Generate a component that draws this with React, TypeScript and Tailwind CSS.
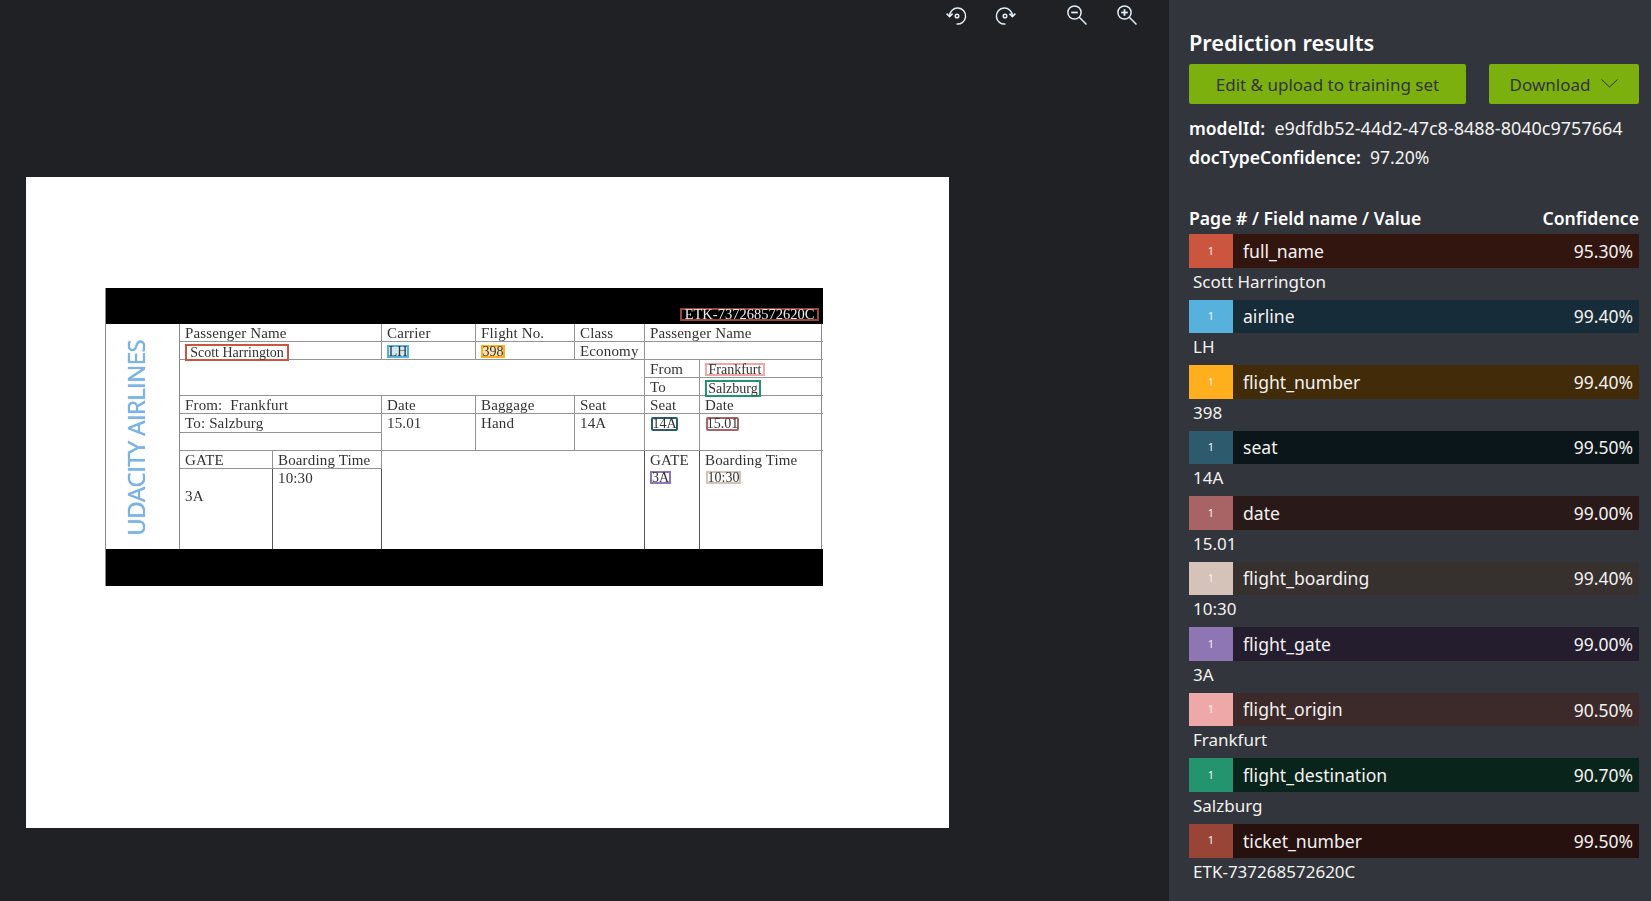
const fields = [
  { name: 'full_name', value: 'Scott Harrington', conf: '95.30%', color: 'bg-[#cc5540]', dark: 'bg-[#331510]' },
  { name: 'airline', value: 'LH', conf: '99.40%', color: 'bg-[#57b1dd]', dark: 'bg-[#162c38]' },
  { name: 'flight_number', value: '398', conf: '99.40%', color: 'bg-[#ffaf1e]', dark: 'bg-[#412b08]' },
  { name: 'seat', value: '14A', conf: '99.50%', color: 'bg-[#2e5a6e]', dark: 'bg-[#0b161b]' },
  { name: 'date', value: '15.01', conf: '99.00%', color: 'bg-[#a86464]', dark: 'bg-[#2a1919]' },
  { name: 'flight_boarding', value: '10:30', conf: '99.40%', color: 'bg-[#d5c2b8]', dark: 'bg-[#36302e]' },
  { name: 'flight_gate', value: '3A', conf: '99.00%', color: 'bg-[#8e75b4]', dark: 'bg-[#231d2d]' },
  { name: 'flight_origin', value: 'Frankfurt', conf: '90.50%', color: 'bg-[#efa8a8]', dark: 'bg-[#3c2a2a]' },
  { name: 'flight_destination', value: 'Salzburg', conf: '90.70%', color: 'bg-[#23946e]', dark: 'bg-[#09251b]' },
  { name: 'ticket_number', value: 'ETK-737268572620C', conf: '99.50%', color: 'bg-[#984538]', dark: 'bg-[#26110e]' },
];

function RotateIcon({ flip }: { flip?: boolean }) {
  return (
    <svg width="22" height="22" viewBox="0 0 22 22" fill="none" stroke="#e3eef8" strokeWidth="1.5" className={flip ? '-scale-x-100' : ''}>
      <path d="M4.6 12 A8 8 0 1 1 11.5 20" />
      <path d="M1.6 9.6 L4.6 12.6 L7.6 9.6" />
      <circle cx="12" cy="12" r="1.8" />
    </svg>
  );
}

function ZoomIcon({ plus }: { plus?: boolean }) {
  return (
    <svg width="22" height="22" viewBox="0 0 22 22" fill="none" stroke="#e3eef8" strokeWidth="1.5">
      <circle cx="8.5" cy="8.5" r="6.6" />
      <path d="M13.3 13.3 L20.5 20.5" />
      <path d="M5.2 8.5 H11.8" strokeWidth="1.8" />
      {plus && <path d="M8.5 5.2 V11.8" strokeWidth="1.8" />}
    </svg>
  );
}

function Box({ className, children }: { className: string; children: string }) {
  return <span className={`flex items-center justify-center border-2 text-[14px] tracking-normal whitespace-nowrap ${className}`}>{children}</span>;
}

const line = 'border-b border-[#949494]';
const cell = `border-r ${line} pt-px pl-[5px] leading-[17px] whitespace-nowrap`;
const lastCell = `${line} pt-px pl-[5px] leading-[17px] whitespace-nowrap`;

function Ticket() {
  return (
    <div className="grid w-[717px] grid-cols-[74px_93px_109px_94px_99px_70px_55px_123px] grid-rows-[36px_18px_18px_18px_18px_18px_19px_18px_18px_80px_37px] border-r border-l border-[#8a8a8a] font-['Liberation_Serif',serif] text-[15px] tracking-[0.15px] text-[#333] blur-[0.4px] [&>div]:min-w-0">
      <div className="relative col-span-8 bg-black">
        <span className="absolute right-[4px] bottom-[3px] flex h-[13px] w-[139px] items-center justify-center border-2 border-[#984538] text-[14.5px] leading-[9px] tracking-normal whitespace-nowrap text-[#eee]">
          ETK-737268572620C
        </span>
      </div>

      <div className="row-span-9 flex items-center justify-center border-r border-[#8a8a8a] pt-[3px] pr-[13px]">
        <span className="rotate-180 font-['Open_Sans',sans-serif] text-[24px] leading-none tracking-[-0.6px] text-[#7db4e3] [text-shadow:0_0_1px_#3f8fd6] [writing-mode:vertical-rl]">UDACITY AIRLINES</span>
      </div>

      <div className={`col-span-2 ${cell}`}>Passenger Name</div>
      <div className={cell}>Carrier</div>
      <div className={cell}>Flight No.</div>
      <div className={cell}>Class</div>
      <div className={`col-span-2 ${lastCell}`}>Passenger Name</div>

      <div className={`col-span-2 ${cell}`}><Box className="mt-px h-[17px] w-[104px] border-[#cc5540] leading-[13px]">Scott Harrington</Box></div>
      <div className={cell}><Box className="mt-[2px] h-[13px] w-[22px] border-[#57b1dd] bg-[#cfe8f6] leading-[9px]">LH</Box></div>
      <div className={cell}><Box className="mt-[2px] h-[13px] w-[24px] border-[#ffaf1e] bg-[#ffe3ae] leading-[9px]">398</Box></div>
      <div className={cell}>Economy</div>
      <div className={`col-span-2 ${line}`} />

      <div className={`col-span-5 row-span-2 border-r ${line}`} />
      <div className={cell}>From</div>
      <div className={lastCell}><Box className="mt-[2px] h-[13px] w-[60px] border-[#efa8a8] leading-[9px]">Frankfurt</Box></div>
      <div className={cell}>To</div>
      <div className={lastCell}><Box className="mt-px h-[17px] w-[56px] border-[#23946e] leading-[13px]">Salzburg</Box></div>

      <div className={`col-span-2 ${cell}`}>From:&nbsp; Frankfurt</div>
      <div className={cell}>Date</div>
      <div className={cell}>Baggage</div>
      <div className={cell}>Seat</div>
      <div className={cell}>Seat</div>
      <div className={lastCell}>Date</div>

      <div className={`col-span-2 ${cell}`}>To: Salzburg</div>
      <div className={`row-span-2 ${cell}`}>15.01</div>
      <div className={`row-span-2 ${cell}`}>Hand</div>
      <div className={`row-span-2 ${cell}`}>14A</div>
      <div className={`row-span-2 ${cell}`}><Box className="mt-[2px] ml-px h-[14px] w-[27px] rounded-[2px] border-[#2e5a6e] leading-[10px]">14A</Box></div>
      <div className={`row-span-2 ${lastCell}`}><Box className="mt-[2px] ml-px h-[14px] w-[33px] rounded-[2px] border-[#a86464] leading-[10px]">15.01</Box></div>

      <div className={`col-span-2 border-r ${line}`} />

      <div className={cell}>GATE</div>
      <div className={cell}>Boarding Time</div>
      <div className="col-span-3 row-span-2 border-r border-[#555]" />
      <div className="row-span-2 border-r border-[#555] pt-px pl-[5px] leading-[17px]">
        <div>GATE</div>
        <Box className="mt-[2px] h-[13px] w-[21px] border-[#8e75b4] leading-[9px]">3A</Box>
      </div>
      <div className="row-span-2 pt-px pl-[5px] leading-[17px]">
        <div>Boarding Time</div>
        <Box className="mt-[2px] ml-px h-[13px] w-[35px] border-[#d5c2b8] leading-[9px]">10:30</Box>
      </div>

      <div className="border-r border-[#555] pt-[19px] pl-[5px] leading-[17px]">3A</div>
      <div className="border-r border-[#555] pt-px pl-[5px] leading-[17px]">10:30</div>

      <div className="col-span-8 bg-black" />
    </div>
  );
}

export default function App() {
  return (
    <div className="flex h-[901px] w-[1651px] overflow-hidden bg-[#1f2125] font-['Noto_Sans',sans-serif]">
      <div className="flex-1">
        <div className="flex h-[26px] items-center justify-end pt-[4px] pr-[31px]">
          <RotateIcon />
          <div className="ml-[28px]"><RotateIcon flip /></div>
          <div className="ml-[49px]"><ZoomIcon /></div>
          <div className="ml-[28px]"><ZoomIcon plus /></div>
        </div>
        <div className="mt-[151px] ml-[26px] flex h-[651px] w-[923px] items-start bg-white pt-[111px] pl-[79px]">
          <Ticket />
        </div>
      </div>

      <aside className="w-[482px] bg-[#32353b] pr-[12px] pl-[20px] text-[#f3f2f1]">
        <h1 className="pt-[27px] text-[21.7px] leading-[32px] font-semibold text-white">Prediction results</h1>
        <div className="mt-[5px] flex h-[40px] justify-between text-[17px] text-[#32353b]">
          <button className="w-[277px] rounded-[2px] bg-[#7cb00e] pt-[2px]">Edit &amp; upload to training set</button>
          <button className="flex w-[150px] items-center justify-center gap-[11px] rounded-[2px] bg-[#7cb00e]">
            <span className="pt-[2px]">Download</span>
            <svg width="17" height="9" viewBox="0 0 17 9" fill="none" stroke="#32353b" strokeWidth="1" className="-mt-px"><path d="M0.5 0.5 L8.5 8 L16.5 0.5" /></svg>
          </button>
        </div>
        <div className="mt-[10px] text-[18px] leading-[29px]">
          <div><b className="text-[17.5px] font-semibold text-white">modelId:</b>&nbsp; e9dfdb52-44d2-47c8-8488-8040c9757664</div>
          <div><b className="text-[17.5px] font-semibold text-white">docTypeConfidence:</b>&nbsp; <span className="text-[17.5px]">97.20%</span></div>
        </div>
        <div className="mt-[33px] flex h-[27px] items-center justify-between text-[17.6px] font-semibold text-white">
          <span>Page # / Field name / Value</span>
          <span>Confidence</span>
        </div>
        <div className="mt-[2px]">
          {fields.map((f) => (
            <div key={f.name} className="h-[65.55px]">
              <div className={`flex h-[33.6px] items-center ${f.dark}`}>
                <div className={`flex h-full w-[44px] items-center justify-center text-[11px] ${f.color}`}>1</div>
                <span className="ml-[10px] text-[17.6px]">{f.name}</span>
                <span className="mr-[6px] ml-auto text-[17.5px]">{f.conf}</span>
              </div>
              <div className="pt-px pl-[4px] text-[17px] leading-[25px]">{f.value}</div>
            </div>
          ))}
        </div>
      </aside>
    </div>
  );
}
